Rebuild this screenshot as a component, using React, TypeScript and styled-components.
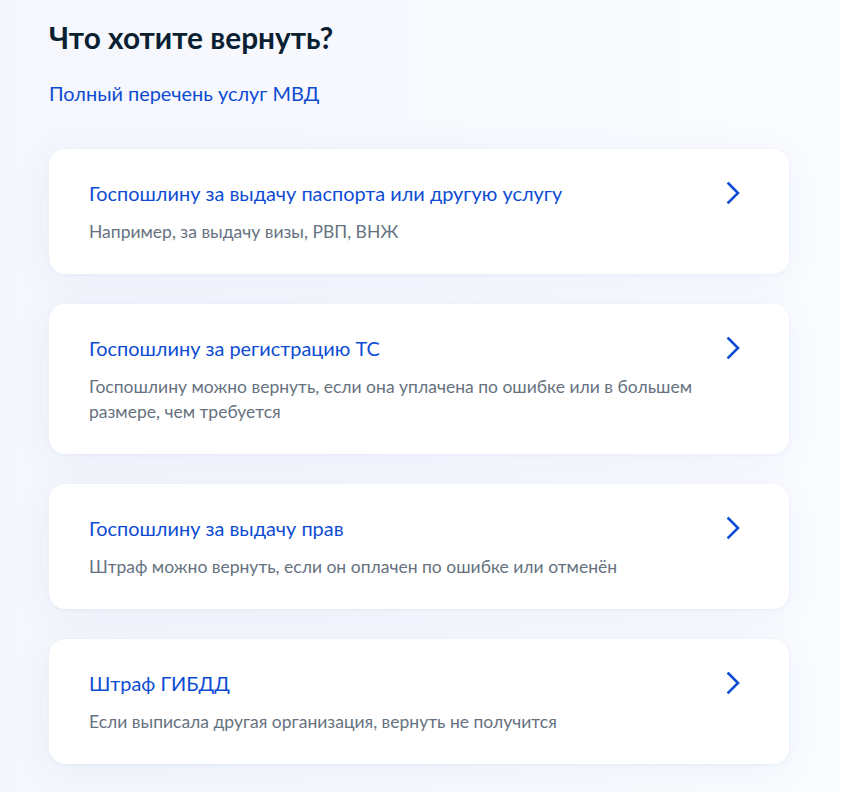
import styled, { createGlobalStyle } from 'styled-components';

const GlobalStyle = createGlobalStyle`
  html, body {
    margin: 0;
    padding: 0;
    background: linear-gradient(90deg, #f5f7fc 0%, #f8f9fe 50%, #fbfcff 100%);
    font-family: Lato, "Noto Sans", sans-serif;
    -webkit-font-smoothing: antialiased;
  }
`;

const Page = styled.main`
  padding: 20px 52px 28px 49px;
  min-height: 792px;
  box-sizing: border-box;
`;

const Heading = styled.h1`
  margin: 0;
  font-size: 29.8px;
  line-height: 36px;
  font-weight: 700;
  color: #0b1f33;
`;

const CatalogLink = styled.a`
  display: inline-block;
  margin-top: 24px;
  font-size: 19.9px;
  line-height: 26px;
  color: #0d4cd3;
  text-decoration: none;
  cursor: pointer;
`;

const List = styled.div`
  margin-top: 43px;
  display: flex;
  flex-direction: column;
  gap: 30.5px;
`;

const Card = styled.a`
  display: flex;
  align-items: flex-start;
  justify-content: space-between;
  gap: 24px;
  padding: 32px 44px 30px 40px;
  background: #ffffff;
  border-radius: 16px;
  box-shadow:
    0 1px 4px rgba(40, 70, 160, 0.05),
    0 6px 40px rgba(40, 80, 200, 0.06);
  text-decoration: none;
  cursor: pointer;
`;

const CardText = styled.div`
  display: flex;
  flex-direction: column;
  gap: 13.5px;
  max-width: 620px;
`;

const CardTitle = styled.span`
  font-size: 19.9px;
  line-height: 24px;
  color: #0d4cd3;
`;

const CardNote = styled.span`
  font-size: 17.5px;
  line-height: 25px;
  color: #66727f;
`;

const Chevron = styled.svg`
  flex: none;
  width: 24px;
  height: 24px;
`;

const items = [
  {
    title: 'Госпошлину за выдачу паспорта или другую услугу',
    note: 'Например, за выдачу визы, РВП, ВНЖ',
  },
  {
    title: 'Госпошлину за регистрацию ТС',
    note: 'Госпошлину можно вернуть, если она уплачена по ошибке или в большем размере, чем требуется',
  },
  {
    title: 'Госпошлину за выдачу прав',
    note: 'Штраф можно вернуть, если он оплачен по ошибке или отменён',
  },
  {
    title: 'Штраф ГИБДД',
    note: 'Если выписала другая организация, вернуть не получится',
  },
];

export default function App() {
  return (
    <>
      <GlobalStyle />
      <Page>
        <Heading>Что хотите вернуть?</Heading>
        <CatalogLink>Полный перечень услуг МВД</CatalogLink>
        <List>
          {items.map((item) => (
            <Card key={item.title}>
              <CardText>
                <CardTitle>{item.title}</CardTitle>
                <CardNote>{item.note}</CardNote>
              </CardText>
              <Chevron viewBox="0 0 24 24" fill="none">
                <path
                  d="M7.5 2.5L17 12L7.5 21.5"
                  stroke="#0d4cd3"
                  strokeWidth="2.6"
                  strokeLinecap="square"
                />
              </Chevron>
            </Card>
          ))}
        </List>
      </Page>
    </>
  );
}
